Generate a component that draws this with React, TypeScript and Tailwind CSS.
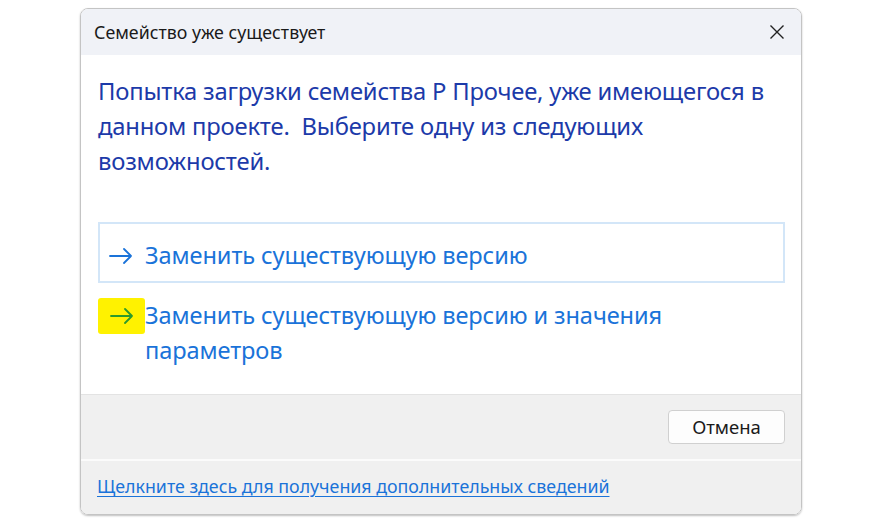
import React from "react";

function Arrow({ color }: { color: string }) {
  return (
    <svg width="24" height="16" viewBox="0 0 24 16" fill="none">
      <path d="M1 8H22M15 1L22 8L15 15" stroke={color} strokeWidth="1.8" strokeLinecap="round" strokeLinejoin="round" />
    </svg>
  );
}

export default function App() {
  const font = { fontFamily: '"Noto Sans", "Open Sans", sans-serif' };
  return (
    <div className="w-[879px] h-[522px] bg-white overflow-hidden" style={font}>
      <div className="ml-[80px] mt-[8px] w-[722px] h-[507px] rounded-[8px] border border-[#c4c4c4] overflow-hidden flex flex-col shadow-[0_1px_2px_rgba(0,0,0,0.25)]">
        {/* title bar */}
        <div className="h-[46px] bg-[#f0f2f7] flex items-center justify-between pl-[13px] pr-[16px] shrink-0">
          <span className="text-[17.8px] text-[#1a1a1a]">Семейство уже существует</span>
          <svg width="16" height="16" viewBox="0 0 16 16">
            <path d="M1.5 1.5L14.5 14.5M14.5 1.5L1.5 14.5" stroke="#222" strokeWidth="1.4" />
          </svg>
        </div>

        {/* body */}
        <div className="bg-white flex-1 pl-[17px] pr-[16px] pt-[19px]">
          <p className="text-[23.8px] leading-[35px] text-[#1c3aa9] tracking-[-0.2px] whitespace-nowrap">
            Попытка загрузки семейства Р Прочее, уже имеющегося в
            <br />
            данном проекте.&nbsp; Выберите одну из следующих
            <br />
            возможностей.
          </p>

          <div className="mt-[43px] h-[61px] border-2 border-[#d3e6f8] flex items-center pl-[9px] pt-[6px]">
            <Arrow color="#1a73d9" />
            <span className="ml-[12px] text-[23.6px] text-[#1a73d9] tracking-[-0.1px]">Заменить существующую версию</span>
          </div>

          <div className="mt-[15px] flex items-start">
            <div className="w-[47px] h-[36px] bg-[#fff200] rounded-[3px] flex items-center justify-center shrink-0">
              <Arrow color="#2c9b2c" />
            </div>
            <span className="text-[23.6px] leading-[35px] text-[#1a73d9] tracking-[-0.1px]">
              Заменить существующую версию и значения
              <br />
              параметров
            </span>
          </div>
        </div>

        {/* button row */}
        <div className="h-[65px] shrink-0 bg-[#f0f0f0] border-t border-[#e3e3e3] flex items-center justify-end pr-[16px]">
          <button className="w-[117px] h-[34px] bg-[#fdfdfd] border border-[#d0d0d0] rounded-[4px] text-[18.5px] text-[#1a1a1a]">
            Отмена
          </button>
        </div>

        {/* footer link */}
        <div className="h-[55px] shrink-0 bg-[#f0f0f0] border-t-2 border-[#fbfbfb] flex items-center pl-[16px] pb-[2px]">
          <span className="text-[17.8px] text-[#1a73d9] underline underline-offset-[3px]">
            Щелкните здесь для получения дополнительных сведений
          </span>
        </div>
      </div>
    </div>
  );
}
